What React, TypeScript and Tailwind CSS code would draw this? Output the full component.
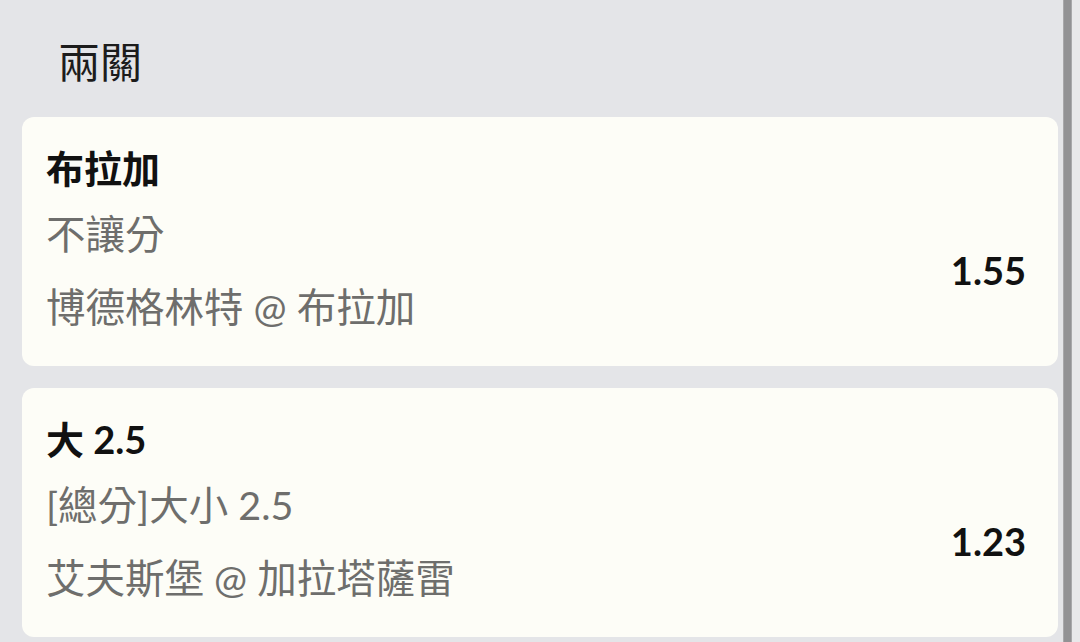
const font = { fontFamily: 'Lato, "Noto Sans CJK TC", sans-serif' };

const bets = [
  { pick: "布拉加", market: "不讓分", match: "博德格林特 @ 布拉加", odds: "1.55" },
  { pick: "大 2.5", market: "[總分]大小 2.5", match: "艾夫斯堡 @ 加拉塔薩雷", odds: "1.23" },
];

export default function App() {
  return (
    <div className="flex h-[642px] w-[1080px] overflow-hidden bg-[#e4e5e8]" style={font}>
      <main className="flex-1 pl-[22px] pr-[5px]">
        {/* 標題 */}
        <h1 className="pt-8 pl-9 mb-[25px] text-[42px] leading-[60px] font-normal text-[#1c1c1c]">兩關</h1>

        {/* 投注卡片 */}
        <div className="flex flex-col gap-[22px]">
          {bets.map((b, i) => (
            <div key={i} className="rounded-xl bg-[#fdfdf7] pl-6 pr-8 pt-6 pb-6">
              <div className="text-[38px] leading-[54px] font-bold text-[#111]">{b.pick}</div>
              <div className="mt-1 flex items-center justify-between">
                <div className="flex flex-col gap-[3px] text-[39.5px] leading-[70px] text-[#6e6e6c]">
                  <div>{b.market}</div>
                  <div>{b.match}</div>
                </div>
                <div className="text-[38px] font-bold text-[#111]">{b.odds}</div>
              </div>
            </div>
          ))}
        </div>
      </main>

      {/* 捲軸 */}
      <div className="w-[9px] bg-[#929294] border-x border-[#a8a8aa]" />
      <div className="w-[8px] bg-[#e8e8ea]" />
    </div>
  );
}
